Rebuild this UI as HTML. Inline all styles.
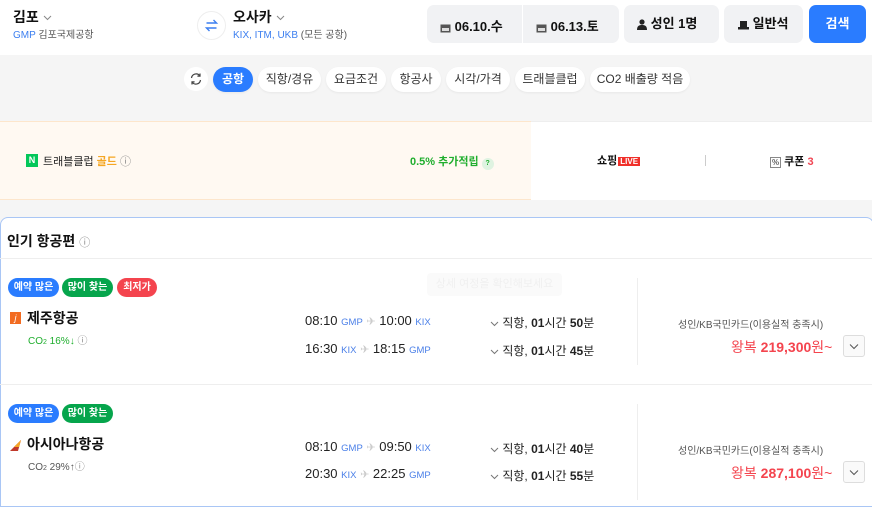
<!DOCTYPE html>
<html><head><meta charset="utf-8"><style>
*{box-sizing:border-box;margin:0;padding:0}
body{width:872px;height:500px;overflow:hidden;background:#f5f5f5;font-family:"Liberation Sans","Noto Sans CJK KR",sans-serif;color:#111;position:relative}
.a{position:absolute;white-space:nowrap}
.b{font-weight:bold}
.chip{position:absolute;top:67px;height:25px;border-radius:13px;background:#fff;font-size:12px;line-height:25px;text-align:center;color:#333;box-shadow:0 1px 2px rgba(0,0,0,.06)}
.box{position:absolute;top:5px;height:38px;background:#f1f2f4;border-radius:7px;font-size:13px;font-weight:bold;line-height:38px}
.badge{position:absolute;height:19px;border-radius:10px;color:#fff;font-size:10px;font-weight:bold;line-height:19px;text-align:center}
.t{font-size:13px;color:#222}
.c{font-size:9.5px;color:#4a7fe8}
.dur{font-size:12px;color:#222}
svg{display:inline-block;vertical-align:middle}
</style></head><body>
<div class="a" style="left:0;top:0;width:872px;height:55px;background:#fff"></div>
<div class="a b" style="left:13px;top:7px;font-size:14px">김포 <svg width="9" height="6"><path d="M1 1l3.5 3.5L8 1" stroke="#888" fill="none"/></svg></div>
<div class="a" style="left:13px;top:26px;font-size:10px;color:#555"><span style="color:#3c7ff0">GMP</span> 김포국제공항</div>
<div class="a" style="left:197px;top:11px;width:29px;height:29px;border-radius:50%;border:1px solid #eee;background:#fff"><svg width="27" height="27" style="position:absolute;left:0;top:0"><path d="M8.5 11h10l-3-3M18.5 16h-10l3 3" stroke="#3c7ff0" stroke-width="1.4" fill="none"/></svg></div>
<div class="a b" style="left:233px;top:7px;font-size:14px">오사카 <svg width="9" height="6"><path d="M1 1l3.5 3.5L8 1" stroke="#888" fill="none"/></svg></div>
<div class="a" style="left:233px;top:26px;font-size:10px;color:#555"><span style="color:#3c7ff0">KIX, ITM, UKB</span> (모든 공항)</div>
<div class="box" style="left:427px;width:192px"></div>
<div class="a" style="left:522px;top:5px;width:1px;height:38px;background:#fff"></div>
<div class="a b" style="left:440px;top:16px;font-size:13px"><svg width="11" height="10"><rect x="0.5" y="1.5" width="10" height="8" fill="#555"/><rect x="2" y="5" width="7" height="3" fill="#ddd"/></svg> 06.10.수</div>
<div class="a b" style="left:536px;top:16px;font-size:13px"><svg width="11" height="10"><rect x="0.5" y="1.5" width="10" height="8" fill="#555"/><rect x="2" y="5" width="7" height="3" fill="#ddd"/></svg> 06.13.토</div>
<div class="box" style="left:624px;width:95px;padding-left:13px"><svg width="10" height="11"><circle cx="5" cy="3" r="2.6" fill="#222"/><path d="M0 11c0-4 2-5 5-5s5 1 5 5z" fill="#222"/></svg> 성인 1명</div>
<div class="box" style="left:724px;width:79px;padding-left:14px"><svg width="11" height="10"><rect x="2" y="1" width="7" height="6" fill="#222"/><rect x="0" y="7" width="11" height="2.5" fill="#222"/></svg> 일반석</div>
<div class="box" style="left:809px;width:57px;background:#2a7cff;color:#fff;text-align:center">검색</div>

<div class="a" style="left:184px;top:67px;width:24px;height:24px;border-radius:50%;background:#fff"><svg width="24" height="24"><path d="M7.5 11a4.6 4.6 0 0 1 8.3-2.2M16.5 13a4.6 4.6 0 0 1-8.3 2.2M16 6.5v2.6h-2.6M8 17.5v-2.6h2.6" stroke="#444" stroke-width="1.2" fill="none"/></svg></div>
<div class="chip" style="left:213px;width:40px;background:#2a7cff;color:#fff;font-weight:bold">공항</div>
<div class="chip" style="left:258px;width:63px">직항/경유</div>
<div class="chip" style="left:326px;width:60px">요금조건</div>
<div class="chip" style="left:391px;width:50px">항공사</div>
<div class="chip" style="left:446px;width:64px">시각/가격</div>
<div class="chip" style="left:515px;width:70px">트래블클럽</div>
<div class="chip" style="left:590px;width:100px">CO2 배출량 적음</div>

<div class="a" style="left:0;top:121px;width:531px;height:79px;background:#fff9f2;border-top:1px solid #fde6cc;border-bottom:1px solid #fde6cc"></div>
<div class="a" style="left:531px;top:121px;width:341px;height:79px;background:#fff;border-top:1px solid #eee"></div>
<div class="a" style="left:26px;top:154px;width:12px;height:13px;background:#03c75a;color:#fff;font-size:9px;font-weight:bold;text-align:center;line-height:13px">N</div>
<div class="a" style="left:43px;top:153px;font-size:11px;color:#222">트래블클럽 <span style="color:#f5a623;font-weight:bold">골드</span> <span style="color:#888">ⓘ</span></div>
<div class="a b" style="left:410px;top:153px;font-size:11px;color:#1fae2e">0.5% 추가적립 <span style="display:inline-block;width:12px;height:12px;border-radius:50%;background:#dff3e1;font-size:7px;text-align:center;line-height:12px">?</span></div>
<div class="a b" style="left:597px;top:152px;font-size:11px">쇼핑<span style="background:#f0302a;color:#fff;font-size:8px;padding:0 2px;margin-left:1px">LIVE</span></div>
<div class="a" style="left:705px;top:155px;width:1px;height:11px;background:#ccc"></div>
<div class="a b" style="left:770px;top:153px;font-size:11px"><span style="font-size:8px;color:#666;border:1px solid #888;padding:0 1px">%</span> 쿠폰 <span style="color:#f04452">3</span></div>

<div class="a" style="left:0;top:217px;width:874px;height:290px;background:#fff;border:1px solid #a9c6f5;border-radius:8px 8px 0 0"></div>
<div class="a b" style="left:7px;top:231px;font-size:14px">인기 항공편 <span style="font-weight:normal;color:#888;font-size:11px">ⓘ</span></div>
<div class="a" style="left:0;top:258px;width:872px;height:1px;background:#eee"></div>
<div class="a" style="left:427px;top:273px;width:135px;height:23px;border-radius:4px;background:#fafafa;color:#f0f0f0;font-size:11px;text-align:center;line-height:23px">상세 여정을 확인해보세요</div>

<!-- flight 1 -->
<div class="badge" style="left:8px;top:278px;width:51px;background:#2a7cff">예약 많은</div>
<div class="badge" style="left:62px;top:278px;width:51px;background:#06a54c">많이 찾는</div>
<div class="badge" style="left:117px;top:278px;width:40px;background:#f4444e">최저가</div>
<div class="a" style="left:10px;top:312px;width:11px;height:12px;background:#f26b21;color:#fff;font-size:9px;font-style:italic;text-align:center;line-height:12px">j</div>
<div class="a b" style="left:27px;top:308px;font-size:14px">제주항공</div>
<div class="a" style="left:28px;top:332px;font-size:10px;color:#1fae2e">CO<span style="font-size:7px">2</span> 16%↓ <span style="color:#888">ⓘ</span></div>
<div class="a t" style="left:305px;top:313px">08:10 <span class="c">GMP</span> <span style="color:#ccc;font-size:11px">✈</span> 10:00 <span class="c">KIX</span></div>
<div class="a t" style="left:305px;top:341px">16:30 <span class="c">KIX</span> <span style="color:#ccc;font-size:11px">✈</span> 18:15 <span class="c">GMP</span></div>
<div class="a dur" style="left:490px;top:314px"><svg width="9" height="6"><path d="M1 1l3.5 3.5L8 1" stroke="#777" fill="none"/></svg> 직항, <b>01</b>시간 <b>50</b>분</div>
<div class="a dur" style="left:490px;top:342px"><svg width="9" height="6"><path d="M1 1l3.5 3.5L8 1" stroke="#777" fill="none"/></svg> 직항, <b>01</b>시간 <b>45</b>분</div>
<div class="a" style="left:637px;top:278px;width:1px;height:87px;background:#eee"></div>
<div class="a" style="left:678px;top:316px;font-size:10px;color:#555">성인/KB국민카드(이용실적 충족시)</div>
<div class="a" style="left:731px;top:337px;font-size:14px;color:#f4444e">왕복 <b>219,300</b>원~</div>
<div class="a" style="left:843px;top:335px;width:22px;height:22px;border:1px solid #ddd;border-radius:3px;background:#fafafa"><svg width="20" height="20"><path d="M6 8.5l4 4 4-4" stroke="#555" fill="none"/></svg></div>
<div class="a" style="left:0;top:384px;width:872px;height:1px;background:#eee"></div>

<!-- flight 2 -->
<div class="badge" style="left:8px;top:404px;width:51px;background:#2a7cff">예약 많은</div>
<div class="badge" style="left:62px;top:404px;width:51px;background:#06a54c">많이 찾는</div>
<div class="a" style="left:9px;top:437px"><svg width="13" height="13"><path d="M1 12L12 1 9 12z" fill="#c0392b"/><path d="M5 8L12 1 10 8z" fill="#f5a623"/></svg></div>
<div class="a b" style="left:27px;top:434px;font-size:14px">아시아나항공</div>
<div class="a" style="left:28px;top:458px;font-size:10px;color:#555">CO<span style="font-size:7px">2</span> 29%↑<span style="color:#888">ⓘ</span></div>
<div class="a t" style="left:305px;top:439px">08:10 <span class="c">GMP</span> <span style="color:#ccc;font-size:11px">✈</span> 09:50 <span class="c">KIX</span></div>
<div class="a t" style="left:305px;top:466px">20:30 <span class="c">KIX</span> <span style="color:#ccc;font-size:11px">✈</span> 22:25 <span class="c">GMP</span></div>
<div class="a dur" style="left:490px;top:440px"><svg width="9" height="6"><path d="M1 1l3.5 3.5L8 1" stroke="#777" fill="none"/></svg> 직항, <b>01</b>시간 <b>40</b>분</div>
<div class="a dur" style="left:490px;top:467px"><svg width="9" height="6"><path d="M1 1l3.5 3.5L8 1" stroke="#777" fill="none"/></svg> 직항, <b>01</b>시간 <b>55</b>분</div>
<div class="a" style="left:637px;top:404px;width:1px;height:96px;background:#eee"></div>
<div class="a" style="left:678px;top:442px;font-size:10px;color:#555">성인/KB국민카드(이용실적 충족시)</div>
<div class="a" style="left:731px;top:463px;font-size:14px;color:#f4444e">왕복 <b>287,100</b>원~</div>
<div class="a" style="left:843px;top:461px;width:22px;height:22px;border:1px solid #ddd;border-radius:3px;background:#fafafa"><svg width="20" height="20"><path d="M6 8.5l4 4 4-4" stroke="#555" fill="none"/></svg></div>
</body></html>
